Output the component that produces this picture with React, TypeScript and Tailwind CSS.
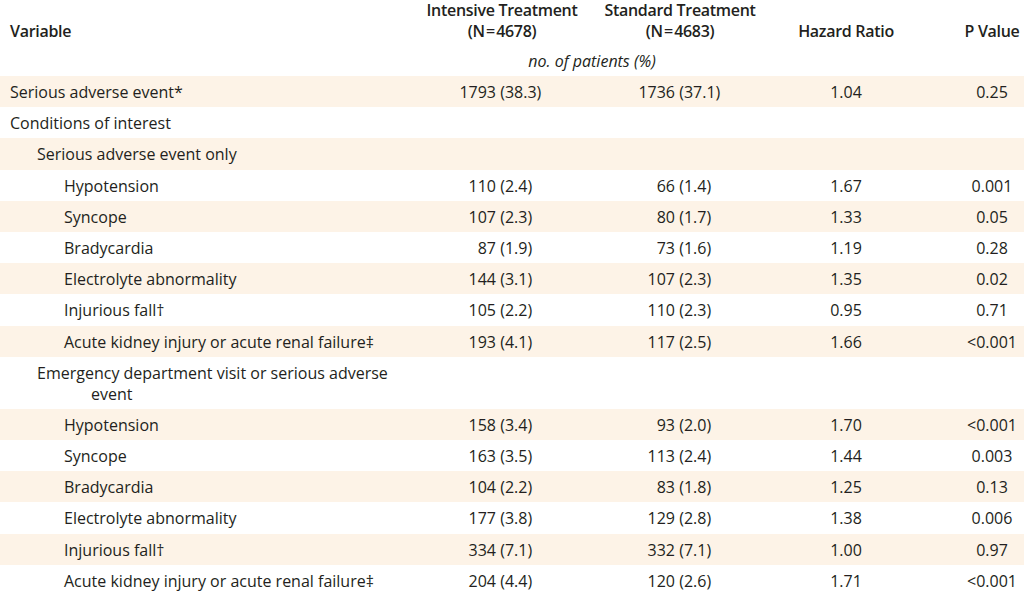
import React from 'react';

interface Row {
    label: string;
    level: 1 | 2 | 3;
    intensive?: string;
    standard?: string;
    hr?: string;
    p?: string;
}

const rows: Row[] = [
    { label: 'Serious adverse event*', level: 1, intensive: '1793 (38.3)', standard: '1736 (37.1)', hr: '1.04', p: '0.25' },
    { label: 'Conditions of interest', level: 1 },
    { label: 'Serious adverse event only', level: 2 },
    { label: 'Hypotension', level: 3, intensive: '110 (2.4)', standard: '66 (1.4)', hr: '1.67', p: '0.001' },
    { label: 'Syncope', level: 3, intensive: '107 (2.3)', standard: '80 (1.7)', hr: '1.33', p: '0.05' },
    { label: 'Bradycardia', level: 3, intensive: '87 (1.9)', standard: '73 (1.6)', hr: '1.19', p: '0.28' },
    { label: 'Electrolyte abnormality', level: 3, intensive: '144 (3.1)', standard: '107 (2.3)', hr: '1.35', p: '0.02' },
    { label: 'Injurious fall\u2020', level: 3, intensive: '105 (2.2)', standard: '110 (2.3)', hr: '0.95', p: '0.71' },
    { label: 'Acute kidney injury or acute renal failure\u2021', level: 3, intensive: '193 (4.1)', standard: '117 (2.5)', hr: '1.66', p: '<0.001' },
    { label: 'Emergency department visit or serious adverse event', level: 2 },
    { label: 'Hypotension', level: 3, intensive: '158 (3.4)', standard: '93 (2.0)', hr: '1.70', p: '<0.001' },
    { label: 'Syncope', level: 3, intensive: '163 (3.5)', standard: '113 (2.4)', hr: '1.44', p: '0.003' },
    { label: 'Bradycardia', level: 3, intensive: '104 (2.2)', standard: '83 (1.8)', hr: '1.25', p: '0.13' },
    { label: 'Electrolyte abnormality', level: 3, intensive: '177 (3.8)', standard: '129 (2.8)', hr: '1.38', p: '0.006' },
    { label: 'Injurious fall\u2020', level: 3, intensive: '334 (7.1)', standard: '332 (7.1)', hr: '1.00', p: '0.97' },
    { label: 'Acute kidney injury or acute renal failure\u2021', level: 3, intensive: '204 (4.4)', standard: '120 (2.6)', hr: '1.71', p: '<0.001' },
];

const grid = 'grid grid-cols-[410px_184px_172px_160px_98px]';

// count right-aligned, percentage left-aligned, meeting at the space
function Count({ value, lead }: { value?: string; lead: string }) {
    if (!value) return <div />;
    const i = value.indexOf(' ');
    return (
        <div className="flex">
            <span className={`${lead} shrink-0 text-right`}>{value.slice(0, i)}</span>
            <span className="whitespace-pre">{value.slice(i)}</span>
        </div>
    );
}

const indent = {
    1: 'pl-[10px]',
    2: 'pl-[91px] -indent-[54px]',
    3: 'pl-[64px]',
};

export default function App() {
    return (
        <div className="h-[596px] w-[1024px] overflow-hidden bg-white font-['Open_Sans',sans-serif] text-[16px] leading-[21px] text-[#231f20]">
            <div className={`${grid} font-semibold tracking-[-0.3px]`}>
                <div className="flex items-end pl-[10px]">Variable</div>
                <div className="text-center">
                    Intensive Treatment
                    <br />
                    (N{'\u200A'}={'\u200A'}4678)
                </div>
                <div className="text-center">
                    Standard Treatment
                    <br />
                    (N{'\u200A'}={'\u200A'}4683)
                </div>
                <div className="flex items-end justify-center">Hazard Ratio</div>
                <div className="flex items-end justify-center pl-[34px]">P Value</div>
            </div>
            <div className={`${grid} h-[34px] items-center pt-[5px]`}>
                <div />
                <div className="col-span-2 pl-[8px] text-center italic">no. of patients (%)</div>
            </div>
            {rows.map((r, idx) => (
                <div
                    key={idx}
                    className={`${grid} pt-[6px] pb-[4.2px] ${idx % 2 === 0 ? 'bg-[#fdf3e7]' : 'bg-white'}`}
                >
                    <div className={`${indent[r.level]} pr-[20px]`}>{r.label}</div>
                    <Count value={r.intensive} lead="w-[86px]" />
                    <Count value={r.standard} lead="w-[81px]" />
                    <div className="text-center">{r.hr}</div>
                    <div className="pl-[34px] text-center">{r.p}</div>
                </div>
            ))}
        </div>
    );
}
